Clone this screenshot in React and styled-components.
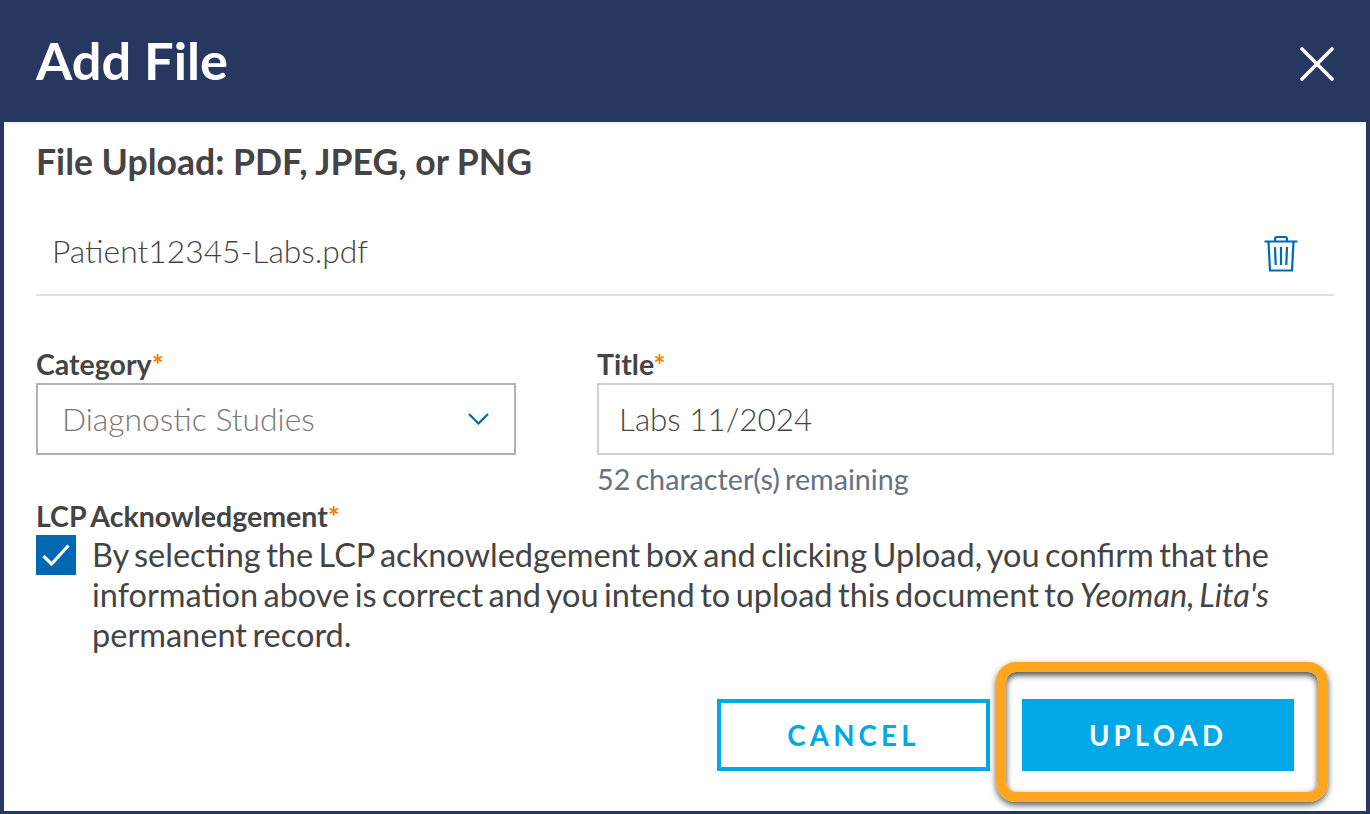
import styled, { createGlobalStyle } from "styled-components";

const GlobalStyle = createGlobalStyle`
  html, body {
    margin: 0;
    padding: 0;
    background-color: #27375f;
    font-family: Lato, "Open Sans", sans-serif;
  }
  * {
    box-sizing: border-box;
  }
`;

const Modal = styled.div`
  width: 1370px;
  height: 814px;
  display: flex;
  flex-direction: column;
  background-color: #27375f;
  overflow: hidden;
`;

const Header = styled.header`
  height: 122px;
  flex: none;
  display: flex;
  align-items: center;
  justify-content: space-between;
  padding: 0 36px;
`;

const Title = styled.h1`
  margin: 0 0 2px;
  font-size: 52.4px;
  line-height: 60px;
  font-weight: 700;
  color: #fff;
`;

const CloseButton = styled.button`
  display: flex;
  margin-top: 6px;
  padding: 0;
  border: none;
  background: none;
`;

const Body = styled.main`
  position: relative;
  height: 689px;
  margin: 0 4px;
  padding: 18px 32px 0;
  background-color: #fff;
  border-top: 2px solid #f1f1f1;
  color: #444;
`;

const Heading = styled.h2`
  margin: 0;
  font-size: 35.6px;
  line-height: 40px;
  font-weight: 700;
`;

const FileRow = styled.div`
  height: 104px;
  margin-top: 10px;
  display: flex;
  align-items: center;
  justify-content: space-between;
  padding: 16px 36px 0 16px;
  border-bottom: 2px solid #e0e0e0;
  font-size: 31.8px;
  font-weight: 300;
`;

const Fields = styled.div`
  margin-top: 49px;
  display: grid;
  grid-template-columns: 480px 1fr;
  column-gap: 81px;
`;

const Label = styled.div`
  font-size: 28.5px;
  line-height: 38px;
  font-weight: 700;
  word-spacing: -1.5px;
`;

const Required = styled.span`
  color: #ef8200;
`;

const Box = styled.div`
  height: 72px;
  display: flex;
  align-items: center;
  justify-content: space-between;
  padding: 0 25px 0 ${(props) => (props.$light ? "24px" : "20px")};
  border: 2px solid ${(props) => (props.$light ? "#b1b1b1" : "#cbd2d9")};
  font-size: ${(props) => (props.$light ? "31.8px" : "31.4px")};
  font-weight: 300;
  color: ${(props) => (props.$light ? "#777" : "#444")};
`;

const Hint = styled.div`
  margin-top: 5px;
  font-size: 28.7px;
  line-height: 38px;
  word-spacing: -2.2px;
  color: #66717f;
`;

const AckLabel = styled(Label)`
  margin-top: -1px;
`;

const AckRow = styled.div`
  display: flex;
  gap: 16px;
`;

const Checkbox = styled.div`
  width: 40px;
  height: 40px;
  flex: none;
  display: flex;
  align-items: center;
  justify-content: center;
  background-color: #0268b2;
`;

const AckText = styled.p`
  margin: 0;
  width: 1210px;
  font-size: 32.5px;
  line-height: 40px;
  word-spacing: -2.85px;
`;

const Actions = styled.div`
  margin-top: 44px;
  display: flex;
  justify-content: flex-end;
  gap: 32px;
  padding-right: 40px;
`;

const Button = styled.button`
  width: ${(props) => (props.$primary ? "272px" : "273px")};
  height: 72px;
  font-family: inherit;
  font-size: 27.6px;
  font-weight: 700;
  letter-spacing: 4.2px;
  color: ${(props) => (props.$primary ? "#fff" : "#00a8e6")};
  background-color: ${(props) => (props.$primary ? "#00a8e6" : "#fff")};
  border: 4px solid #00a8e6;
`;

const Highlight = styled.div`
  position: absolute;
  left: 992px;
  top: 538px;
  width: 332px;
  height: 140px;
  border: 10px solid #ffa51e;
  border-radius: 20px;
  box-shadow: 0 3px 6px rgba(0, 0, 0, 0.65), inset 0 3px 6px rgba(0, 0, 0, 0.75);
  pointer-events: none;
`;

const TrashWrap = styled.span`
  display: flex;
  margin-top: 6px;
`;

const CloseIcon = () => (
  <svg width="34" height="34" viewBox="0 0 34 34" fill="none" stroke="#fff" strokeWidth="3.6" strokeLinecap="round">
    <path d="M2 2 L32 32 M32 2 L2 32" />
  </svg>
);

const TrashIcon = () => (
  <svg width="34" height="36" viewBox="0 0 34 36" fill="none" stroke="#0268b2" strokeWidth="2.2">
    <path d="M0.5 5.5 H33.5" />
    <path d="M11 5 V3 Q11 1 13 1 H21 Q23 1 23 3 V5" />
    <path d="M4.5 6 L6 34.5 H28 L29.5 6" />
    <path d="M11 11 L11.7 29 M17 11 V29 M23 11 L22.3 29" />
  </svg>
);

const ChevronIcon = () => (
  <svg width="21" height="12" viewBox="0 0 21 12" fill="none" stroke="#0268b2" strokeWidth="2.2">
    <path d="M1 1 L10.5 10.5 L20 1" />
  </svg>
);

const CheckIcon = () => (
  <svg width="28" height="22" viewBox="0 0 28 22" fill="none" stroke="#fff" strokeWidth="3.2">
    <path d="M1.5 12 L9.5 20 L26.5 1.5" />
  </svg>
);

const App = () => {
  return (
    <Modal>
      <GlobalStyle />
      <Header>
        <Title>Add File</Title>
        <CloseButton aria-label="Close">
          <CloseIcon />
        </CloseButton>
      </Header>
      <Body>
        <Heading>File Upload: PDF, JPEG, or PNG</Heading>
        <FileRow>
          <span>Patient12345-Labs.pdf</span>
          <TrashWrap>
            <TrashIcon />
          </TrashWrap>
        </FileRow>
        <Fields>
          <div>
            <Label>
              Category<Required>*</Required>
            </Label>
            <Box $light>
              <span>Diagnostic Studies</span>
              <ChevronIcon />
            </Box>
          </div>
          <div>
            <Label>
              Title<Required>*</Required>
            </Label>
            <Box>Labs 11/2024</Box>
            <Hint>52 character(s) remaining</Hint>
          </div>
        </Fields>
        <AckLabel>
          LCP Acknowledgement<Required>*</Required>
        </AckLabel>
        <AckRow>
          <Checkbox>
            <CheckIcon />
          </Checkbox>
          <AckText>
            By selecting the LCP acknowledgement box and clicking Upload, you confirm that the
            information above is correct and you intend to upload this document to <em>Yeoman, Lita's</em>{" "}
            permanent record.
          </AckText>
        </AckRow>
        <Actions>
          <Button>CANCEL</Button>
          <Button $primary>UPLOAD</Button>
        </Actions>
        <Highlight />
      </Body>
    </Modal>
  );
};

export default App;
